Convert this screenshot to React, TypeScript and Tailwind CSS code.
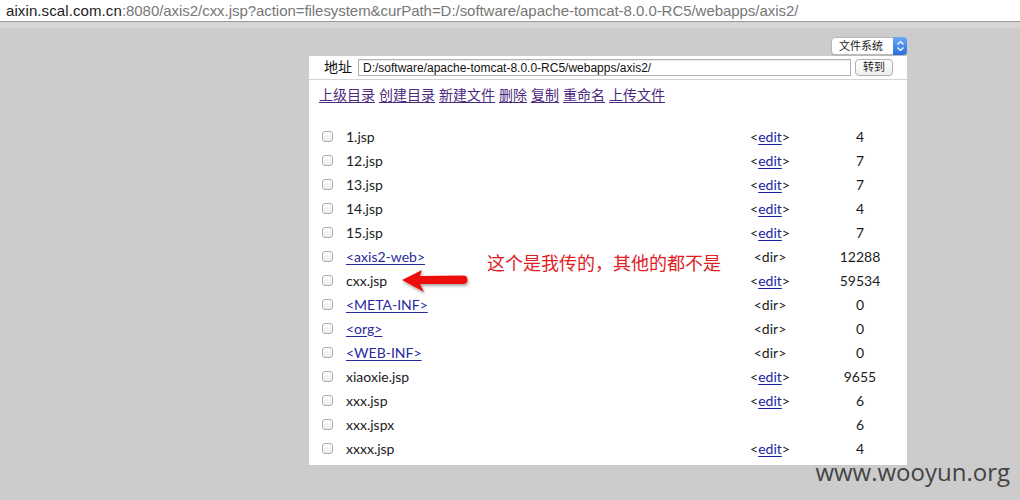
import React from 'react';

type Row = { name: string; link?: boolean; edit: 'edit' | 'dir' | ''; size: string };

const ROWS: Row[] = [
  { name: '1.jsp', edit: 'edit', size: '4' },
  { name: '12.jsp', edit: 'edit', size: '7' },
  { name: '13.jsp', edit: 'edit', size: '7' },
  { name: '14.jsp', edit: 'edit', size: '4' },
  { name: '15.jsp', edit: 'edit', size: '7' },
  { name: '<axis2-web>', link: true, edit: 'dir', size: '12288' },
  { name: 'cxx.jsp', edit: 'edit', size: '59534' },
  { name: '<META-INF>', link: true, edit: 'dir', size: '0' },
  { name: '<org>', link: true, edit: 'dir', size: '0' },
  { name: '<WEB-INF>', link: true, edit: 'dir', size: '0' },
  { name: 'xiaoxie.jsp', edit: 'edit', size: '9655' },
  { name: 'xxx.jsp', edit: 'edit', size: '6' },
  { name: 'xxx.jspx', edit: '', size: '6' },
  { name: 'xxxx.jsp', edit: 'edit', size: '4' },
];

const ACTIONS = ['上级目录', '创建目录', '新建文件', '删除', '复制', '重命名', '上传文件'];

const CJK = "font-['Helvetica','Liberation_Sans','Noto_Sans_CJK_SC',sans-serif]";
const BODY = "font-['Lato','Noto_Sans_CJK_SC',sans-serif]";

function Checkbox() {
  return (
    <span className="block w-[11px] h-[11px] rounded-[3px] border border-[#b0b0b0] bg-gradient-to-b from-white to-[#ececec]" />
  );
}

function Arrow() {
  return (
    <svg width="76" height="36" viewBox="0 0 76 36" className="absolute left-[398px] top-[265px]">
      <defs>
        <filter id="sh" x="-20%" y="-40%" width="140%" height="180%">
          <feDropShadow dx="1" dy="2" stdDeviation="1.5" floodColor="#000" floodOpacity="0.35" />
        </filter>
      </defs>
      <path
        d="M4 15 L24 5 Q23 8 22 11 L65 10.5 Q69.5 10.5 69.5 14.8 Q69.5 19 65 19 L22 19 Q24 23 26 27 Z"
        fill="#ee1111"
        filter="url(#sh)"
      />
    </svg>
  );
}

export default function App() {
  return (
    <div className="w-[1020px] h-[500px] bg-[#cccccc] overflow-hidden relative">
      <div className="h-[22px] bg-white border-b border-[#9a9a9a] flex items-center pl-[6px]">
        <span className="font-['Helvetica','Liberation_Sans',sans-serif] text-[15px] leading-none">
          <span className="text-[#222] tracking-[0.1px]">aixin.scal.com.cn</span>
          <span className="text-[#777] tracking-[-0.05px]">:8080/axis2/cxx.jsp?action=filesystem&amp;curPath=D:/software/apache-tomcat-8.0.0-RC5/webapps/axis2/</span>
        </span>
      </div>
      <div className="h-[6px] bg-[#d6d6d6]" />

      <div className="ml-[309px] w-[598px]">
        <div className="flex justify-end h-[28px] pt-[9px]">
          <div className={`h-[18px] w-[76px] rounded-[4px] bg-white border border-[#b8b8b8] flex items-center ${CJK} text-[11px] text-[#222] shadow-[0_1px_1px_rgba(0,0,0,0.1)]`}>
            <span className="flex-1 pl-[7px]">文件系统</span>
            <span className="w-[14px] h-[18px] -mr-px rounded-r-[4px] bg-gradient-to-b from-[#6aa8f4] to-[#2a6ee0] flex flex-col items-center justify-center gap-[2px]">
              <svg width="7" height="4" viewBox="0 0 7 4"><path d="M0.5 3.5 L3.5 0.5 L6.5 3.5" stroke="#fff" strokeWidth="1.2" fill="none" /></svg>
              <svg width="7" height="4" viewBox="0 0 7 4"><path d="M0.5 0.5 L3.5 3.5 L6.5 0.5" stroke="#fff" strokeWidth="1.2" fill="none" /></svg>
            </span>
          </div>
        </div>

        <div className="bg-white h-[409px] relative">
          <div className={`flex items-center h-[24px] border-b border-[#d4d4d4] ${CJK}`}>
            <span className="ml-[15px] text-[14px] text-[#111] w-[34px]">地址</span>
            <div className="w-[493px] h-[17px] border border-[#b0b0b0] flex items-center pl-[4px] text-[12px] text-[#111] shadow-[inset_0_1px_1px_rgba(0,0,0,0.08)]">
              D:/software/apache-tomcat-8.0.0-RC5/webapps/axis2/
            </div>
            <div className="ml-[4px] w-[38px] h-[17px] rounded-[4px] border border-[#b0b0b0] bg-gradient-to-b from-white to-[#eeeeee] flex items-center justify-center text-[11px] text-[#222]">
              转到
            </div>
          </div>

          <div className={`flex gap-[4px] pl-[10px] pt-[5px] h-[44px] ${CJK} text-[14px]`}>
            {ACTIONS.map((a) => (
              <span key={a} className="text-[#4b2a7e] underline underline-offset-[2px]">
                {a}
              </span>
            ))}
          </div>

          <div className={`${BODY} text-[14px]`}>
            {ROWS.map((r) => (
              <div key={r.name} className="flex items-center h-[24px]">
                <div className="w-[37px] pl-[13px]">
                  <Checkbox />
                </div>
                <div className="flex-1">
                  {r.link ? (
                    <span className="text-[#2a2aa0] underline underline-offset-[2px]">{r.name}</span>
                  ) : (
                    <span className="text-[#1c1c1c]">{r.name}</span>
                  )}
                </div>
                <div className="w-[80px] text-center text-[#1c1c1c]">
                  {r.edit === 'edit' && (
                    <>
                      &lt;<span className="text-[#1e1eaa] underline underline-offset-[2px]">edit</span>&gt;
                    </>
                  )}
                  {r.edit === 'dir' && <>&lt;dir&gt;</>}
                </div>
                <div className="w-[80px] ml-[10px] mr-[7px] text-center text-[#1c1c1c]">{r.size}</div>
              </div>
            ))}
          </div>

          <div className={`absolute left-[178px] top-[195px] ${CJK} text-[18px] text-[#e0201f] whitespace-nowrap`}>
            这个是我传的，其他的都不是
          </div>
        </div>
      </div>

      <div className="absolute left-0 top-0 pointer-events-none">
        <Arrow />
      </div>

      <div className="absolute right-[10px] top-[463px] font-['Open_Sans',sans-serif] text-[24px] text-[#444] leading-[18px]">
        www.wooyun.org
      </div>
    </div>
  );
}
